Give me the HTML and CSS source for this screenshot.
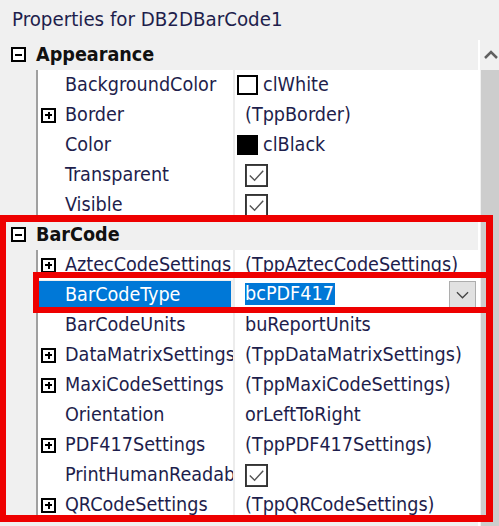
FILE: index.html
```html
<!DOCTYPE html>
<html>
<head>
<meta charset="utf-8">
<link rel="stylesheet" href="styles.css">
</head>
<body>
<div class="title">Properties for DB2DBarCode1</div>
<div class="main">
  <div class="grid">
    <div class="cat"><span class="box minus"></span><span class="catname">Appearance</span></div>
    <div class="prop"><div class="gut"></div><div class="name">BackgroundColor</div><div class="sep"></div><div class="value sw"><span class="swatch white"></span>clWhite</div></div>
    <div class="prop"><div class="gut"></div><div class="name ex"><span class="box plus"></span>Border</div><div class="sep"></div><div class="value">(TppBorder)</div></div>
    <div class="prop"><div class="gut"></div><div class="name">Color</div><div class="sep"></div><div class="value sw"><span class="swatch black"></span>clBlack</div></div>
    <div class="prop"><div class="gut"></div><div class="name">Transparent</div><div class="sep"></div><div class="value"><svg class="chk" viewBox="0 0 24 24"><rect x="1" y="1" width="22" height="22" fill="#fff" stroke="#333" stroke-width="2"/><polyline points="5,12 10,17 19,7" fill="none" stroke="#555" stroke-width="1.5"/></svg></div></div>
    <div class="prop"><div class="gut"></div><div class="name">Visible</div><div class="sep"></div><div class="value"><svg class="chk" viewBox="0 0 24 24"><rect x="1" y="1" width="22" height="22" fill="#fff" stroke="#333" stroke-width="2"/><polyline points="5,12 10,17 19,7" fill="none" stroke="#555" stroke-width="1.5"/></svg></div></div>
    <div class="cat"><span class="box minus"></span><span class="catname">BarCode</span></div>
    <div class="prop"><div class="gut"></div><div class="name ex"><span class="box plus"></span>AztecCodeSettings</div><div class="sep"></div><div class="value">(TppAztecCodeSettings)</div></div>
    <div class="prop"><div class="gut"></div><div class="name sel">BarCodeType</div><div class="sep"></div><div class="value edit"><span class="hl">bcPDF417</span><span class="drop"><svg viewBox="0 0 14 8" class="chev"><polyline points="1,1 7,7 13,1" fill="none" stroke="#444" stroke-width="1.4"/></svg></span></div></div>
    <div class="prop"><div class="gut"></div><div class="name">BarCodeUnits</div><div class="sep"></div><div class="value">buReportUnits</div></div>
    <div class="prop"><div class="gut"></div><div class="name ex"><span class="box plus"></span>DataMatrixSettings</div><div class="sep"></div><div class="value">(TppDataMatrixSettings)</div></div>
    <div class="prop"><div class="gut"></div><div class="name ex"><span class="box plus"></span>MaxiCodeSettings</div><div class="sep"></div><div class="value">(TppMaxiCodeSettings)</div></div>
    <div class="prop"><div class="gut"></div><div class="name">Orientation</div><div class="sep"></div><div class="value">orLeftToRight</div></div>
    <div class="prop"><div class="gut"></div><div class="name ex"><span class="box plus"></span>PDF417Settings</div><div class="sep"></div><div class="value">(TppPDF417Settings)</div></div>
    <div class="prop"><div class="gut"></div><div class="name">PrintHumanReadable</div><div class="sep"></div><div class="value"><svg class="chk" viewBox="0 0 24 24"><rect x="1" y="1" width="22" height="22" fill="#fff" stroke="#333" stroke-width="2"/><polyline points="5,12 10,17 19,7" fill="none" stroke="#555" stroke-width="1.5"/></svg></div></div>
    <div class="prop"><div class="gut"></div><div class="name ex"><span class="box plus"></span>QRCodeSettings</div><div class="sep"></div><div class="value">(TppQRCodeSettings)</div></div>
  </div>
  <div class="scroll">
    <svg class="up" viewBox="0 0 16 10"><polyline points="2,9 8,3 14,9" fill="none" stroke="#606060" stroke-width="2.5"/></svg>
    <div class="thumb"></div>
  </div>
</div>
<div class="mark big"></div>
<div class="mark small"></div>
</body>
</html>
```
FILE: styles.css
```css
html, body {
  margin: 0;
  padding: 0;
}
body {
  width: 499px;
  height: 526px;
  overflow: hidden;
  background: #f0f0f0;
  font-family: "DejaVu Sans Condensed", "DejaVu Sans", sans-serif;
  font-stretch: condensed;
  font-size: 19.6px;
  color: #1e1e4c;
  position: relative;
}
.title {
  height: 40px;
  line-height: 39px;
  padding-left: 12px;
  font-size: 20.3px;
  color: #1e1e4c;
}
.main {
  display: flex;
  height: 486px;
}
.grid {
  width: 482px;
  border-right: 2px solid #ffffff;
  display: flex;
  flex-direction: column;
}
.cat {
  height: 30px;
  box-sizing: border-box;
  padding-bottom: 1px;
  display: flex;
  align-items: center;
  background: #f0f0f0;
  padding-left: 11px;
}
.catname {
  font-weight: bold;
  color: #111;
  margin-left: 10px;
}
.box {
  width: 15px;
  height: 15px;
  box-sizing: border-box;
  border: 2px solid #000;
  background: #fff;
  position: relative;
  flex: none;
}
.box::before {
  content: "";
  position: absolute;
  left: 2px;
  right: 2px;
  top: 4.5px;
  height: 2px;
  background: #000;
}
.plus::after {
  content: "";
  position: absolute;
  top: 2px;
  bottom: 2px;
  left: 4.5px;
  width: 2px;
  background: #000;
}
.prop {
  height: 30px;
  display: flex;
}
.gut {
  width: 36px;
  border-right: 2px solid #a0a0a0;
  background: #f0f0f0;
  flex: none;
}
.name {
  width: 195px;
  box-sizing: border-box;
  padding-left: 27px;
  padding-bottom: 2px;
  background: #fff;
  display: flex;
  align-items: center;
  white-space: nowrap;
  overflow: hidden;
  flex: none;
}
.name.ex {
  padding-left: 3px;
}
.name.ex .box {
  margin-right: 9px;
  margin-top: 2px;
}
.name.sel {
  background: #0078d7;
  color: #fff;
  margin: 1px 2px 1px 1px;
  width: 192px;
  padding-left: 26px;
}
.sep {
  width: 2px;
  background: #ececec;
  flex: none;
}
.value {
  flex: 1;
  box-sizing: border-box;
  background: #fff;
  display: flex;
  align-items: center;
  padding-left: 10px;
  padding-bottom: 2px;
  white-space: nowrap;
  overflow: hidden;
}
.value.sw {
  padding-left: 2px;
}
.swatch {
  width: 21px;
  height: 20px;
  box-sizing: border-box;
  border: 2px solid #000;
  margin-right: 5px;
  margin-top: 2px;
  flex: none;
}
.swatch.white { background: #fff; }
.swatch.black { background: #000; }
.chk {
  width: 23px;
  height: 23px;
  margin-top: 2px;
  display: block;
}
.value.edit {
  padding-right: 2px;
  padding-bottom: 0;
}
.hl {
  background: #0078d7;
  color: #fff;
  line-height: 22px;
  padding-right: 1px;
  margin-bottom: 2px;
}
.drop {
  margin-left: auto;
  width: 27px;
  height: 28px;
  box-sizing: border-box;
  border: 1px solid #adadad;
  background: #e1e1e1;
  display: flex;
  align-items: center;
  justify-content: center;
}
.chev {
  width: 13px;
  height: 8px;
  display: block;
}
.scroll {
  flex: 1;
  display: flex;
  flex-direction: column;
  background: #f0f0f0;
}
.up {
  width: 16px;
  height: 10px;
  margin: 9px 0 0 3px;
  display: block;
}
.thumb {
  margin-top: 11px;
  flex: 1;
  margin-left: 1px;
  background: #cdcdcd;
}
.mark {
  position: absolute;
  border: 7px solid #ee0000;
  box-sizing: border-box;
}
.mark.big {
  left: -1px;
  top: 215px;
  width: 494px;
  height: 307px;
}
.mark.small {
  left: 33px;
  top: 272px;
  width: 460px;
  height: 41px;
  border-width: 6px;
}
```
